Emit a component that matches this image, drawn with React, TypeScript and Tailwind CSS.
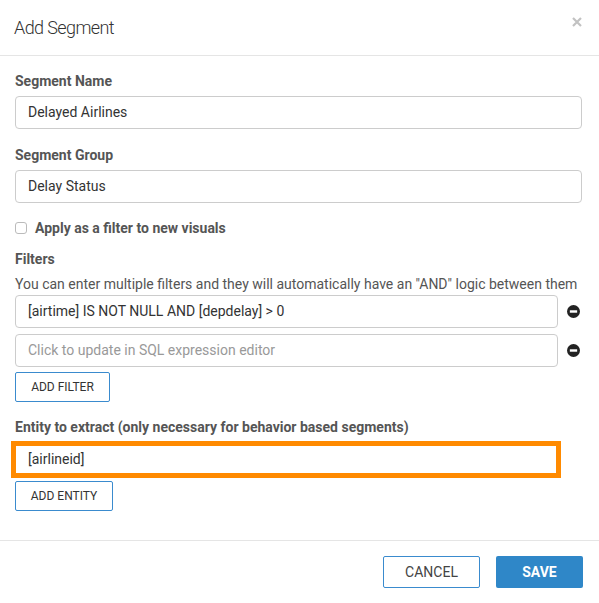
import React from 'react';

const MinusCircle = () => (
  <svg width="13" height="13" viewBox="0 0 16 16" className="shrink-0">
    <circle cx="8" cy="8" r="8" fill="#222" />
    <rect x="3.5" y="6.5" width="9" height="3" fill="#fff" />
  </svg>
);

const CloseX = () => (
  <svg width="10" height="10" viewBox="0 0 10 10" className="-mt-[11px]">
    <path d="M1 1 L9 9 M9 1 L1 9" stroke="#c2c2c2" strokeWidth="2.2" />
  </svg>
);

export default function App() {
  return (
    <div className="w-[599px] h-[603px] bg-white text-[#333] font-['Roboto',sans-serif] flex flex-col">
      <div className="h-[56px] border-b border-[#e5e5e5] flex items-center justify-between pl-[14px] pr-[17px]">
        <h1 className="text-[18px] text-[#333] leading-none font-light tracking-[-0.6px] mt-[1px]">Add Segment</h1>
        <CloseX />
      </div>

      <div className="flex-1 flex flex-col pl-[15px] pr-[17px] pt-[15px]">
        <label className="text-[14px] font-bold text-[#555] leading-[20px]">Segment Name</label>
        <div className="mt-[5px] h-[33px] border border-[#ccc] rounded-[4px] flex items-center px-[12px] text-[14px] text-[#333]">
          Delayed Airlines
        </div>

        <label className="mt-[16px] text-[14px] font-bold text-[#555] leading-[20px]">Segment Group</label>
        <div className="mt-[5px] h-[33px] border border-[#ccc] rounded-[4px] flex items-center px-[12px] text-[14px] text-[#333]">
          Delay Status
        </div>

        <div className="mt-[15px] flex items-center gap-[8px] h-[20px]">
          <span className="w-[12px] h-[12px] border border-[#bbb] rounded-[3px] bg-white" />
          <span className="text-[14px] font-bold text-[#555]">Apply as a filter to new visuals</span>
        </div>

        <label className="mt-[11px] text-[14px] font-bold text-[#555] leading-[20px]">Filters</label>
        <p className="mt-[5px] text-[14px] text-[#555] leading-[20px]">
          You can enter multiple filters and they will automatically have an "AND" logic between them
        </p>

        <div className="mt-[1px] flex items-center gap-[9px]">
          <div className="w-[543px] h-[33px] border border-[#ccc] rounded-[4px] flex items-center px-[12px] text-[14px] text-[#333]">
            [airtime] IS NOT NULL AND [depdelay] &gt; 0
          </div>
          <MinusCircle />
        </div>
        <div className="mt-[6px] flex items-center gap-[9px]">
          <div className="w-[543px] h-[33px] border border-[#ccc] rounded-[4px] flex items-center px-[12px] text-[14px] text-[#999]">
            Click to update in SQL expression editor
          </div>
          <MinusCircle />
        </div>

        <button className="mt-[5px] self-start w-[95px] h-[30px] border border-[#3a8bce] rounded-[2px] text-[12px] text-[#333] bg-white">
          ADD FILTER
        </button>

        <label className="mt-[15px] text-[14px] font-bold text-[#555] leading-[20px]">
          Entity to extract (only necessary for behavior based segments)
        </label>
        <div className="mt-[4px] -ml-[4px] w-[550px] h-[37px] border-[5px] border-[#ff8a00] flex items-center pl-[12px] text-[14px] text-[#333]">
          [airlineid]
        </div>

        <button className="mt-[3px] self-start w-[98px] h-[30px] border border-[#3a8bce] rounded-[2px] text-[12px] text-[#333] bg-white">
          ADD ENTITY
        </button>
      </div>

      <div className="h-[63px] border-t border-[#e5e5e5] flex items-start justify-end gap-[16px] pr-[16px] pt-[15px]">
        <button className="w-[97px] h-[32px] border border-[#3a8bce] rounded-[2px] text-[14px] text-[#444] bg-white">
          CANCEL
        </button>
        <button className="w-[87px] h-[32px] rounded-[2px] text-[14px] font-bold text-white bg-[#2f87c8]">
          SAVE
        </button>
      </div>
    </div>
  );
}
